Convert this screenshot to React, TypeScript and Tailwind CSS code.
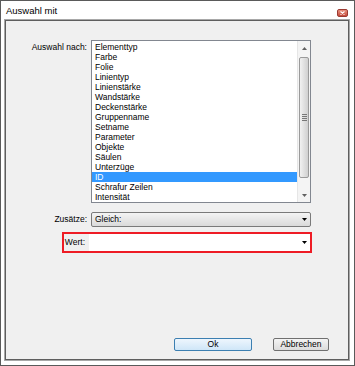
import React from 'react';

const items = [
    'Elementtyp',
    'Farbe',
    'Folie',
    'Linientyp',
    'Linienstärke',
    'Wandstärke',
    'Deckenstärke',
    'Gruppenname',
    'Setname',
    'Parameter',
    'Objekte',
    'Säulen',
    'Unterzüge',
    'ID',
    'Schrafur Zeilen',
    'Intensität',
];

const Arrow: React.FC<{ up?: boolean }> = ({ up }) => (
    <svg width="5" height="3" viewBox="0 0 5 3" className="block">
        <path d={up ? 'M0 3 L5 3 L2.5 0 Z' : 'M0 0 L5 0 L2.5 3 Z'} fill="#000" />
    </svg>
);

const Scrollbar: React.FC = () => (
    <div className="w-[13px] flex flex-col bg-[#f4f4f4] border-l border-[#e6e6e6]">
        <div className="h-[14px] flex items-center justify-center opacity-60">
            <Arrow up />
        </div>
        <div className="mx-[1px] mt-[2px] h-[121px] rounded-[2px] border border-[#9a9a9a] bg-gradient-to-r from-[#f1f1f1] to-[#d0d0d0] flex flex-col items-center justify-center gap-[1px]">
            <div className="w-[5px] h-px bg-[#777]" />
            <div className="w-[5px] h-px bg-[#777]" />
            <div className="w-[5px] h-px bg-[#777]" />
            <div className="w-[5px] h-px bg-[#777]" />
        </div>
        <div className="flex-1 flex items-end justify-center pb-[5px] opacity-60">
            <Arrow />
        </div>
    </div>
);

const App: React.FC = () => {
    return (
        <div
            className="w-[355px] h-[366px] border border-[#5a5a5a] bg-white flex flex-col pl-[3px] pr-[4px] pb-[4px] text-black"
            style={{ fontFamily: '"Liberation Sans", Arial, sans-serif' }}
        >
            {/* title bar */}
            <div className="h-[18px] flex items-center justify-between pl-[2px] pr-[2px]">
                <span className="text-[9.5px] leading-none mt-[1px]">Auswahl mit</span>
                <div className="w-[11px] h-[8px] mt-[5px] rounded-[2px] border border-[#9b3a32] bg-gradient-to-b from-[#e8907e] to-[#c4493a] flex items-center justify-center">
                    <svg width="5" height="4" viewBox="0 0 5 4">
                        <path d="M0.5 0.5 L4.5 3.5 M4.5 0.5 L0.5 3.5" stroke="#fff" strokeWidth="1.2" />
                    </svg>
                </div>
            </div>

            {/* client area */}
            <div className="flex-1 border border-[#a8a8a8]">
                <div className="h-full border border-[#5e5e5e] bg-[#f0f0f0] flex flex-col text-[8.5px] leading-none">
                    {/* Auswahl nach */}
                    <div className="flex gap-[4px] mt-[19px]">
                        <div className="w-[81px] text-right pt-[3px]">Auswahl nach:</div>
                        <div className="w-[220px] h-[163px] border border-[#828790] bg-white flex">
                            <div className="flex-1 pt-[1px]">
                                {items.map((item) => (
                                    <div
                                        key={item}
                                        className={
                                            item === 'ID'
                                                ? 'h-[10px] pl-[3px] flex items-center bg-[#3399ff] text-white'
                                                : 'h-[10px] pl-[3px] flex items-center'
                                        }
                                    >
                                        {item}
                                    </div>
                                ))}
                            </div>
                            <Scrollbar />
                        </div>
                    </div>

                    {/* Zusätze */}
                    <div className="flex items-center gap-[4px] mt-[9px]">
                        <div className="w-[81px] text-right">Zusätze:</div>
                        <div className="w-[220px] h-[15px] rounded-[2px] border border-[#7a7a7a] bg-gradient-to-b from-[#f4f4f4] to-[#dadada] flex items-center justify-between pl-[3px] pr-[3px]">
                            <span>Gleich:</span>
                            <Arrow />
                        </div>
                    </div>

                    {/* Wert */}
                    <div className="ml-[56px] mt-[5px] w-[250px] h-[21px] border-2 border-[#ee1c25] flex items-center gap-[4px]">
                        <div className="w-[21px] text-right">Wert:</div>
                        <div className="flex-1 h-[17px] bg-white flex items-center justify-end pr-[3px]">
                            <Arrow />
                        </div>
                    </div>

                    {/* buttons */}
                    <div className="mt-auto mb-[8px] pr-[19px] flex justify-end items-end gap-[21px]">
                        <button className="w-[78px] h-[13px] rounded-[2px] border border-[#3c7fb1] bg-gradient-to-b from-[#eef6fd] to-[#cfe6f8] text-[8.5px] leading-none">
                            Ok
                        </button>
                        <button className="w-[56px] h-[13px] rounded-[2px] border border-[#707070] bg-gradient-to-b from-[#f4f4f4] to-[#dcdcdc] text-[8.5px] leading-none">
                            Abbrechen
                        </button>
                    </div>
                </div>
            </div>
        </div>
    );
};

export default App;
